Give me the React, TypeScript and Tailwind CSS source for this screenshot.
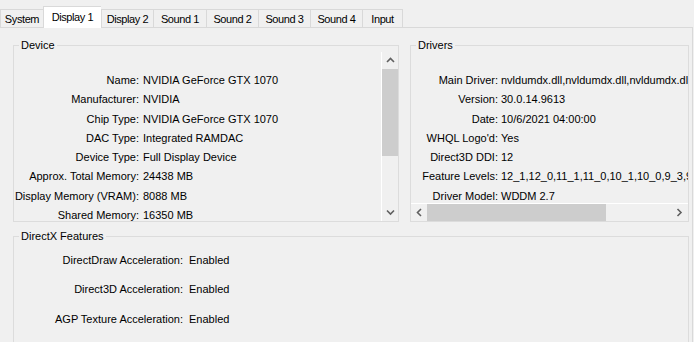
import React from "react";

const tabs = [
  { label: "System", w: "w-[43px]" },
  { label: "Display 1", w: "w-[58px]", active: true },
  { label: "Display 2", w: "w-[52px]" },
  { label: "Sound 1", w: "w-[53px]" },
  { label: "Sound 2", w: "w-[52px]" },
  { label: "Sound 3", w: "w-[52px]" },
  { label: "Sound 4", w: "w-[52px]" },
  { label: "Input", w: "w-[41px]", last: true },
];

const deviceRows = [
  ["Name", "NVIDIA GeForce GTX 1070"],
  ["Manufacturer", "NVIDIA"],
  ["Chip Type", "NVIDIA GeForce GTX 1070"],
  ["DAC Type", "Integrated RAMDAC"],
  ["Device Type", "Full Display Device"],
  ["Approx. Total Memory", "24438 MB"],
  ["Display Memory (VRAM)", "8088 MB"],
  ["Shared Memory", "16350 MB"],
];

const driverRows = [
  ["Main Driver", "nvldumdx.dll,nvldumdx.dll,nvldumdx.dll,nvldumdx.dll"],
  ["Version", "30.0.14.9613"],
  ["Date", "10/6/2021 04:00:00"],
  ["WHQL Logo'd", "Yes"],
  ["Direct3D DDI", "12"],
  ["Feature Levels", "12_1,12_0,11_1,11_0,10_1,10_0,9_3,9_2,9_1"],
  ["Driver Model", "WDDM 2.7"],
];

const dxRows = [
  ["DirectDraw Acceleration", "Enabled"],
  ["Direct3D Acceleration", "Enabled"],
  ["AGP Texture Acceleration", "Enabled"],
];

function Chevron({ dir }: { dir: "up" | "down" | "left" | "right" }) {
  const d = {
    up: "M1 5 L4.5 1.5 L8 5",
    down: "M1 1.5 L4.5 5 L8 1.5",
    left: "M5 1 L1.5 4.5 L5 8",
    right: "M1.5 1 L5 4.5 L1.5 8",
  }[dir];
  const horiz = dir === "left" || dir === "right";
  return (
    <svg
      width={horiz ? 7 : 9}
      height={horiz ? 9 : 7}
      viewBox={horiz ? "0 0 7 9" : "0 0 9 7"}
      fill="none"
      stroke="#606060"
      strokeWidth="1.6"
    >
      <path d={d} />
    </svg>
  );
}

function GroupBox({
  title,
  className,
  children,
}: {
  title: string;
  className?: string;
  children: React.ReactNode;
}) {
  return (
    <fieldset className={`min-w-0 p-0 m-0 border border-[#dcdcdc] flex flex-col ${className ?? ""}`}>
      <legend className="ml-[5px] px-[2px] leading-[13px] h-[13px]">{title}</legend>
      {children}
    </fieldset>
  );
}

export default function App() {
  return (
    <div className="w-[694px] h-[342px] overflow-hidden bg-[#f0f0f0] flex flex-col text-[11px] text-black font-['Liberation_Sans',Arial,sans-serif]">
      {/* Tab strip */}
      <div className="h-[27px] flex items-end shrink-0">
        {tabs.map((t) =>
          t.active ? (
            <div
              key={t.label}
              className={`${t.w} h-[22px] -mb-px relative z-10 bg-white border-t border-l border-[#d9d9d9] flex items-center justify-center tracking-[-0.4px]`}
            >
              {t.label}
            </div>
          ) : (
            <div
              key={t.label}
              className={`${t.w} h-[18px] border-t border-l ${t.last ? "border-r" : ""} border-[#d9d9d9] flex items-center justify-center pt-px tracking-[-0.4px]`}
            >
              {t.label}
            </div>
          )
        )}
      </div>

      {/* Tab page */}
      <div className="flex-1 mr-px border-t border-r border-[#d9d9d9] pt-[11px] pl-[13px] flex flex-col gap-[8px] min-h-0">
        <div className="flex gap-[11px] h-[183px] shrink-0">
          <GroupBox title="Device" className="w-[386px] h-[183px]">
            <div className="flex flex-1 min-h-0">
              <div className="flex-1 overflow-hidden pt-[19px]">
                {deviceRows.map(([k, v]) => (
                  <div key={k} className="flex leading-[19.25px] whitespace-nowrap">
                    <span className="w-[125px] text-right shrink-0">{k}:</span>
                    <span className="pl-[4px]">{v}</span>
                  </div>
                ))}
              </div>
              <div className="w-[17px] border-l border-white flex flex-col">
                <div className="h-[17px] flex items-center justify-center">
                  <Chevron dir="up" />
                </div>
                <div className="flex-1 flex flex-col">
                  <div className="h-[87px] bg-[#cdcdcd]" />
                </div>
                <div className="h-[17px] flex items-center justify-center">
                  <Chevron dir="down" />
                </div>
              </div>
            </div>
          </GroupBox>

          <GroupBox title="Drivers" className="w-[279px] h-[183px]">
            <div className="flex flex-col flex-1 min-h-0">
              <div className="flex-1 overflow-hidden pt-[19px]">
                {driverRows.map(([k, v]) => (
                  <div key={k} className="flex leading-[19.25px] whitespace-nowrap">
                    <span className="w-[87px] text-right shrink-0">{k}:</span>
                    <span className="pl-[3px]">{v}</span>
                  </div>
                ))}
              </div>
              <div className="h-[18px] border-t border-white flex items-stretch">
                <div className="w-[16px] flex items-center justify-center">
                  <Chevron dir="left" />
                </div>
                <div className="flex-1 flex">
                  <div className="w-[179px] bg-[#cdcdcd]" />
                </div>
                <div className="w-[17px] flex items-center justify-center">
                  <Chevron dir="right" />
                </div>
              </div>
            </div>
          </GroupBox>
        </div>

        <GroupBox title="DirectX Features" className="w-[676px] h-[140px] shrink-0">
          <div className="pt-[8px] flex flex-col gap-[10px]">
            {dxRows.map(([k, v]) => (
              <div key={k} className="flex leading-[19.25px] whitespace-nowrap">
                <span className="w-[169px] text-right shrink-0">{k}:</span>
                <span className="pl-[6px]">{v}</span>
              </div>
            ))}
          </div>
        </GroupBox>
      </div>
    </div>
  );
}
